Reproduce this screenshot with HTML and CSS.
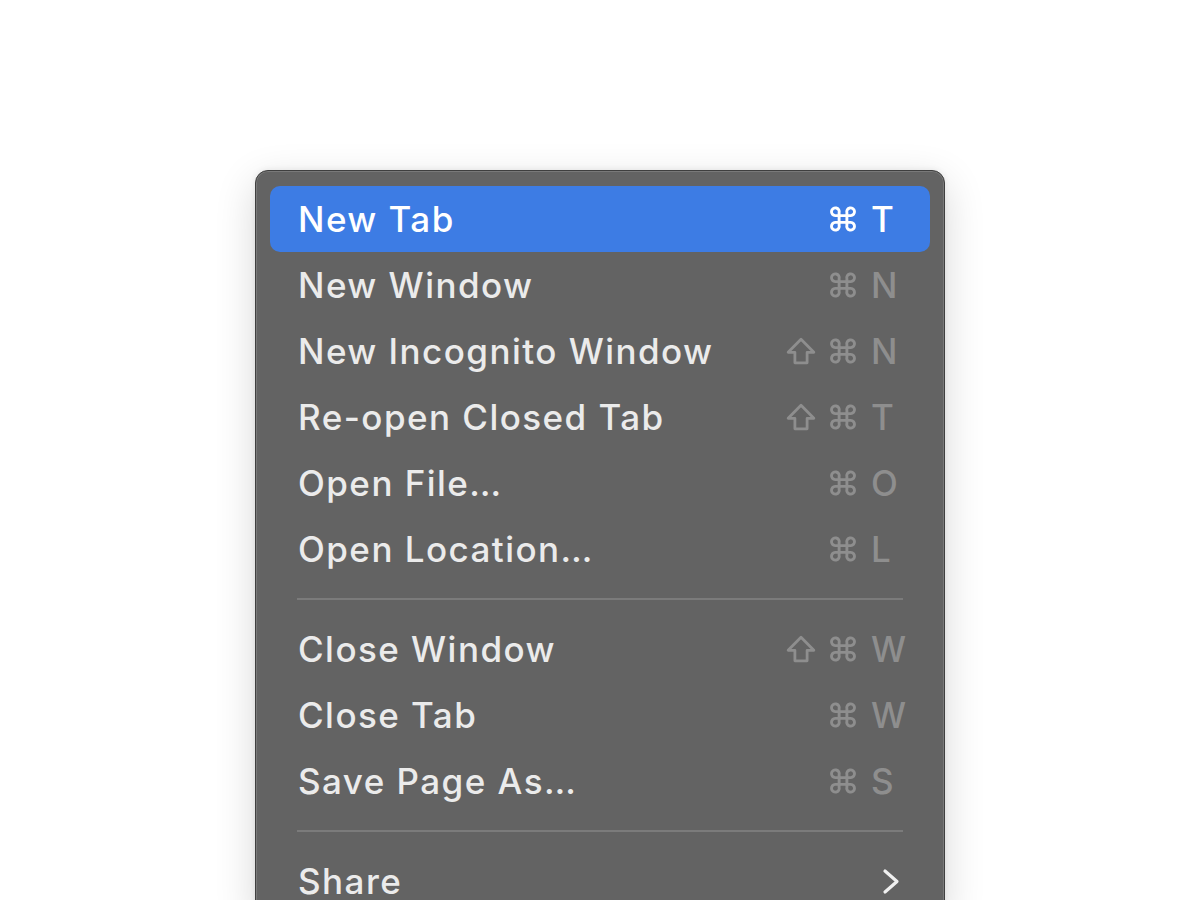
FILE: index.html
```html
<!DOCTYPE html>
<html>
<head>
<meta charset="utf-8">
<link rel="stylesheet" href="styles.css">
</head>
<body>
<svg width="0" height="0" class="defs">
  <defs>
    <symbol id="cmd" viewBox="0 0 27 25">
      <path d="M10 9.5h7v6h-7z M10 9.5V7a3.5 3.5 0 1 0 -3.5 2.5H10 M17 9.5V7a3.5 3.5 0 1 1 3.5 2.5H17 M10 15.5v2.5a3.5 3.5 0 1 1 -3.5 -2.5H10 M17 15.5v2.5a3.5 3.5 0 1 0 3.5 -2.5H17" fill="none" stroke="currentColor" stroke-width="2.6" stroke-linejoin="round"/>
    </symbol>
    <symbol id="shift" viewBox="0 0 28 26">
      <path d="M14 2L2 14.2H8.3V24H19.7V14.2H26Z" fill="none" stroke="currentColor" stroke-width="2.6" stroke-linejoin="round"/>
    </symbol>
  </defs>
</svg>
<div class="page">
  <div class="menu">
    <div class="row active">
      <span class="label">New Tab</span>
      <span class="mods"><svg class="cmd"><use href="#cmd"/></svg></span>
      <span class="key">T</span>
    </div>
    <div class="row">
      <span class="label">New Window</span>
      <span class="mods"><svg class="cmd"><use href="#cmd"/></svg></span>
      <span class="key">N</span>
    </div>
    <div class="row">
      <span class="label">New Incognito Window</span>
      <span class="mods"><svg class="shift"><use href="#shift"/></svg><svg class="cmd"><use href="#cmd"/></svg></span>
      <span class="key">N</span>
    </div>
    <div class="row">
      <span class="label">Re-open Closed Tab</span>
      <span class="mods"><svg class="shift"><use href="#shift"/></svg><svg class="cmd"><use href="#cmd"/></svg></span>
      <span class="key">T</span>
    </div>
    <div class="row">
      <span class="label">Open File…</span>
      <span class="mods"><svg class="cmd"><use href="#cmd"/></svg></span>
      <span class="key">O</span>
    </div>
    <div class="row">
      <span class="label">Open Location…</span>
      <span class="mods"><svg class="cmd"><use href="#cmd"/></svg></span>
      <span class="key">L</span>
    </div>
    <div class="sep"></div>
    <div class="row">
      <span class="label">Close Window</span>
      <span class="mods"><svg class="shift"><use href="#shift"/></svg><svg class="cmd"><use href="#cmd"/></svg></span>
      <span class="key">W</span>
    </div>
    <div class="row">
      <span class="label">Close Tab</span>
      <span class="mods"><svg class="cmd"><use href="#cmd"/></svg></span>
      <span class="key">W</span>
    </div>
    <div class="row">
      <span class="label">Save Page As…</span>
      <span class="mods"><svg class="cmd"><use href="#cmd"/></svg></span>
      <span class="key">S</span>
    </div>
    <div class="sep"></div>
    <div class="row">
      <span class="label">Share</span>
      <span class="mods"></span>
      <span class="key"><svg class="chev" viewBox="0 0 18 27"><path d="M3 3L15 13.5L3 24" fill="none" stroke="currentColor" stroke-width="3.2" stroke-linecap="round" stroke-linejoin="round"/></svg></span>
    </div>
  </div>
</div>
</body>
</html>
```
FILE: styles.css
```css
html, body {
  margin: 0;
  padding: 0;
  background: #ffffff;
  overflow: hidden;
  height: 100%;
}
.defs {
  position: absolute;
  width: 0;
  height: 0;
}
.page {
  display: flex;
  justify-content: center;
  padding-top: 170px;
}
.menu {
  width: 690px;
  box-sizing: border-box;
  background: #636363;
  border: 1px solid #3f3f3f;
  border-radius: 13px;
  box-shadow: inset 0 0 0 1px rgba(255,255,255,0.14), 0 12px 40px rgba(0,0,0,0.16), 0 0 6px rgba(0,0,0,0.08);
  padding: 15px 14px 0;
  font-family: "Inter", "Liberation Sans", sans-serif;
  font-size: 35px;
  font-weight: 500;
  color: #ebebeb;
}
.row {
  height: 66px;
  display: flex;
  align-items: center;
  padding: 0 13px 0 28px;
  border-radius: 10px;
}
.row.active {
  background: #3d7ce4;
  color: #ffffff;
}
.label {
  flex: 1;
  letter-spacing: 1.45px;
}
.mods {
  display: flex;
  align-items: center;
  gap: 12px;
  color: #8e8e8e;
}
.active .mods, .active .key {
  color: #ffffff;
}
.cmd {
  width: 30px;
  height: 28px;
  display: block;
}
.shift {
  width: 30px;
  height: 28px;
  display: block;
}
.key {
  width: 46px;
  margin-left: 13px;
  color: #8e8e8e;
  display: flex;
  align-items: center;
}
.chev {
  width: 18px;
  height: 27px;
  margin-left: 11px;
  color: #f0f0f0;
  display: block;
}
.sep {
  height: 34px;
  display: flex;
  align-items: center;
  padding: 0 27px;
}
.sep::before {
  content: "";
  flex: 1;
  height: 2px;
  background: #7b7b7b;
}
```
